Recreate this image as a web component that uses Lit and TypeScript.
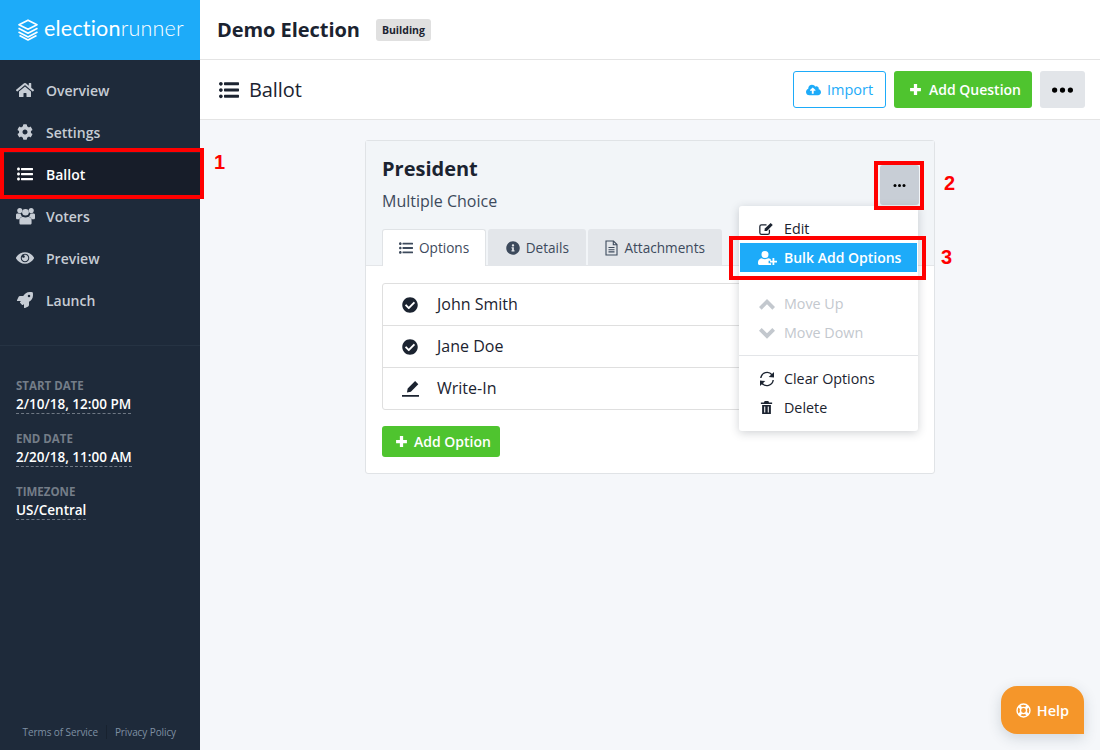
import { LitElement, html, css, svg } from "lit";
import { customElement } from "lit/decorators.js";

const P: Record<string, [number, string]> = {
  home: [576, "M280.37 148.26L96 300.11V464a16 16 0 0 0 16 16l112.06-.29a16 16 0 0 0 15.92-16V368a16 16 0 0 1 16-16h64a16 16 0 0 1 16 16v95.64a16 16 0 0 0 16 16.05L464 480a16 16 0 0 0 16-16V300L295.67 148.26a12.19 12.19 0 0 0-15.3 0zM571.6 251.47L488 182.56V44.05a12 12 0 0 0-12-12h-56a12 12 0 0 0-12 12v72.61L318.47 43a48 48 0 0 0-61 0L4.34 251.47a12 12 0 0 0-1.6 16.9l25.5 31A12 12 0 0 0 45.15 301l235.22-193.74a12.19 12.19 0 0 1 15.3 0L530.9 301a12 12 0 0 0 16.9-1.6l25.5-31a12 12 0 0 0-1.7-16.93z"],
  cog: [512, "M487.4 315.7l-42.6-24.6c4.3-23.2 4.3-47 0-70.2l42.6-24.6c4.9-2.8 7.1-8.6 5.5-14-11.1-35.6-30-67.8-54.7-94.6-3.8-4.1-10-5.1-14.8-2.3L380.8 110c-17.9-15.4-38.5-27.3-60.8-35.1V25.8c0-5.6-3.9-10.5-9.4-11.7-36.7-8.2-74.3-7.8-109.2 0-5.5 1.2-9.4 6.1-9.4 11.7V75c-22.2 7.9-42.8 19.8-60.8 35.1L88.7 85.5c-4.9-2.8-11-1.9-14.8 2.3-24.7 26.7-43.6 58.9-54.7 94.6-1.7 5.4.6 11.2 5.5 14L67.3 221c-4.3 23.2-4.3 47 0 70.2l-42.6 24.6c-4.9 2.8-7.1 8.6-5.5 14 11.1 35.6 30 67.8 54.7 94.6 3.8 4.1 10 5.1 14.8 2.3l42.6-24.6c17.9 15.4 38.5 27.3 60.8 35.1v49.2c0 5.6 3.9 10.5 9.4 11.7 36.7 8.2 74.3 7.8 109.2 0 5.5-1.2 9.4-6.1 9.4-11.7v-49.2c22.2-7.9 42.8-19.8 60.8-35.1l42.6 24.6c4.9 2.8 11 1.9 14.8-2.3 24.7-26.7 43.6-58.9 54.7-94.6 1.5-5.5-.7-11.3-5.6-14.1zM256 336c-44.1 0-80-35.9-80-80s35.9-80 80-80 80 35.9 80 80-35.9 80-80 80z"],
  list: [512, "M96 96c0 26.51-21.49 48-48 48S0 122.51 0 96s21.49-48 48-48 48 21.49 48 48zM48 208c-26.51 0-48 21.49-48 48s21.49 48 48 48 48-21.49 48-48-21.49-48-48-48zm0 160c-26.51 0-48 21.49-48 48s21.49 48 48 48 48-21.49 48-48-21.49-48-48-48zm96-236h352c8.837 0 16-7.163 16-16V76c0-8.837-7.163-16-16-16H144c-8.837 0-16 7.163-16 16v40c0 8.837 7.163 16 16 16zm0 160h352c8.837 0 16-7.163 16-16v-40c0-8.837-7.163-16-16-16H144c-8.837 0-16 7.163-16 16v40c0 8.837 7.163 16 16 16zm0 160h352c8.837 0 16-7.163 16-16v-40c0-8.837-7.163-16-16-16H144c-8.837 0-16 7.163-16 16v40c0 8.837 7.163 16 16 16z"],
  eye: [576, "M569.354 231.631C512.969 135.949 407.81 72 288 72 168.14 72 63.004 135.994 6.646 231.631a47.999 47.999 0 0 0 0 48.739C63.031 376.051 168.19 440 288 440c119.86 0 224.996-63.994 281.354-159.631a47.997 47.997 0 0 0 0-48.738zM288 392c-75.162 0-136-60.827-136-136 0-75.162 60.826-136 136-136 75.162 0 136 60.826 136 136 0 75.162-60.826 136-136 136zm104-136c0 57.438-46.562 104-104 104s-104-46.562-104-104c0-17.708 4.431-34.379 12.236-48.973l-.001.032c0 23.651 19.173 42.823 42.824 42.823s42.824-19.173 42.824-42.823c0-23.651-19.173-42.824-42.824-42.824l-.032.001C253.621 156.431 270.292 152 288 152c57.438 0 104 46.562 104 104z"],
  rocket: [512, "M505.05 19.1a15.89 15.89 0 0 0-12.2-12.2C460.65 0 435.46 0 410.36 0c-103.2 0-165.1 55.2-211.29 128H94.87A48 48 0 0 0 52 154.49l-49.42 98.8A24 24 0 0 0 24.07 288h103.77l-22.47 22.47a32 32 0 0 0 0 45.25l50.9 50.91a32 32 0 0 0 45.26 0L224 384.16V488a24 24 0 0 0 34.7 21.49l98.7-49.39a47.91 47.91 0 0 0 26.5-42.9V312.79c72.59-46.3 128-108.4 128-211.09.1-25.2.1-50.4-6.85-82.6zM384 168a40 40 0 1 1 40-40 40 40 0 0 1-40 40z"],
  check: [512, "M504 256c0 136.967-111.033 248-248 248S8 392.967 8 256 119.033 8 256 8s248 111.033 248 248zM227.314 387.314l184-184c6.248-6.248 6.248-16.379 0-22.627l-22.627-22.627c-6.248-6.249-16.379-6.249-22.628 0L216 308.118l-70.059-70.059c-6.248-6.248-16.379-6.248-22.628 0l-22.627 22.627c-6.248 6.248-6.248 16.379 0 22.627l104 104c6.249 6.249 16.379 6.249 22.628.001z"],
  info: [512, "M256 8C119.043 8 8 119.083 8 256c0 136.997 111.043 248 248 248s248-111.003 248-248C504 119.083 392.957 8 256 8zm0 110c23.196 0 42 18.804 42 42s-18.804 42-42 42-42-18.804-42-42 18.804-42 42-42zm56 254c0 6.627-5.373 12-12 12h-88c-6.627 0-12-5.373-12-12v-24c0-6.627 5.373-12 12-12h12v-64h-12c-6.627 0-12-5.373-12-12v-24c0-6.627 5.373-12 12-12h64c6.627 0 12 5.373 12 12v100h12c6.627 0 12 5.373 12 12v24z"],
  cloud: [640, "M537.6 226.6c4.1-10.7 6.4-22.4 6.4-34.6 0-53-43-96-96-96-19.7 0-38.1 6-53.3 16.2C367 64.2 315.3 32 256 32c-88.4 0-160 71.6-160 160 0 2.7.1 5.4.2 8.1C40.2 219.8 0 273.2 0 336c0 79.5 64.5 144 144 144h368c70.7 0 128-57.3 128-128 0-61.9-44-113.6-102.4-125.4zM393.4 288H328v112c0 8.8-7.2 16-16 16h-48c-8.8 0-16-7.2-16-16V288h-65.4c-14.3 0-21.4-17.2-11.3-27.3l105.4-105.4c6.2-6.2 16.4-6.2 22.6 0l105.4 105.4c10.1 10.1 2.9 27.3-11.3 27.3z"],
  plus: [24, "M9 2h6v7h7v6h-7v7H9v-7H2V9h7z"],
  trash: [24, "M9 1.500h6l1 2.500h5v2.500H3V4h5zM5 8h14v14.500H5zM8.300 10.500v9.500h1.700v-9.500zM14 10.500v9.500h1.700v-9.500z"],
  pen: [24, "M18.500 1.500l4.500 4.500-10.500 10.500-5.500 1 1-5.500zM0 21h24v2.600H0z"],
  chevup: [24, "M12 4.500l12 12-4 4-8-8-8 8-4-4z"],
  chevdown: [24, "M12 20.500L0 8.500l4-4 8 8 8-8 4 4z"],
};

const NAV: [string, string, boolean][] = [
  ["home", "Overview", false],
  ["cog", "Settings", false],
  ["list", "Ballot", true],
  ["users", "Voters", false],
  ["eye", "Preview", false],
  ["rocket", "Launch", false],
];

const icon = (name: string, cls = "") => {
  const [w, d] = P[name];
  return html`<svg class="ic ${cls}" viewBox="0 0 ${w} ${w === 24 ? 24 : 512}" fill="currentColor" aria-hidden="true">${svg`<path d=${d}></path>`}</svg>`;
};

const usersIc = html`<svg class="ic i-users" viewBox="0 0 20 18" fill="currentColor" aria-hidden="true">
  <circle cx="4" cy="3.200" r="2.700"></circle><circle cx="16" cy="3.200" r="2.700"></circle><circle cx="10" cy="5" r="3.500"></circle>
  <path d="M0 7.800C0 6.800.8 6.300 1.800 6.300h3c.2 1.300.8 2.400 1.700 3.200C4.800 10 3.800 11.200 3.500 12.500H1.500C.6 12.500 0 12 0 11zM20 7.800c0-1-.8-1.500-1.800-1.500h-3c-.2 1.300-.8 2.400-1.700 3.200 1.700.5 2.700 1.700 3 3h2c.9 0 1.500-.5 1.500-1.500zM7 9.800c1.800 1 4.200 1 6 0 2 .2 3.400 1.800 3.400 4v2.700c0 1-.7 1.500-1.600 1.500H5.200c-.9 0-1.600-.5-1.600-1.500v-2.700c0-2.200 1.400-3.800 3.400-4z"></path>
</svg>`;

const userPlusIc = html`<svg class="ic i-up" viewBox="0 0 19 14" fill="currentColor" aria-hidden="true">
  <circle cx="7" cy="3.500" r="3.500"></circle>
  <path d="M3.500 7.300c2 1.100 5 1.100 7 0 1.100.2 2 .7 2.600 1.400v1h-2.500v2.600h2.500v1.700H1.500C.6 14 0 13.400 0 12.500v-1.200C0 9.300 1.500 7.700 3.500 7.300z"></path>
  <path d="M14.500 7h1.800v2.800H19v1.800h-2.700v2.400h-1.800v-2.400H12V9.800h2.500z"></path>
</svg>`;

const dots = () => html`<svg viewBox="0 0 24 6" fill="currentColor" aria-hidden="true"><circle cx="3" cy="3" r="3"></circle><circle cx="12" cy="3" r="3"></circle><circle cx="21" cy="3" r="3"></circle></svg>`;

const logo = html`<svg class="logo-ic" viewBox="0 0 22 22" fill="none" stroke="currentColor" stroke-width="1.700" stroke-linejoin="round" aria-hidden="true">
  <path d="M11 1.200L20 5.700 11 10.200 2 5.700z"></path>
  <path d="M1.500 9.200l9.500 5 9.500-5"></path>
  <path d="M1.500 12.900l9.500 5 9.500-5"></path>
  <path d="M2.500 16.500l8.500 4.500 8.500-4.500"></path>
</svg>`;

const fileIc = html`<svg class="ic i-file" viewBox="0 0 13 16" fill="none" stroke="currentColor" stroke-width="1.100" aria-hidden="true">
  <path d="M1 1h7.500L12 4.500V15H1z"></path><path d="M8.300 1v3.700H12M3.500 7.500h6M3.500 9.700h6M3.500 11.900h6"></path>
</svg>`;

const editIc = html`<svg class="ic i-menu" viewBox="0 0 18 16" fill="none" stroke="currentColor" stroke-width="1.500" aria-hidden="true">
  <path d="M12.500 9v3.500a2 2 0 0 1-2 2H3a2 2 0 0 1-2-2V5a2 2 0 0 1 2-2h6"></path>
  <path d="M6.500 10.500l.5-3L14 .8l2.500 2.500-7 7z" fill="currentColor" stroke="none"></path>
</svg>`;

const syncIc = html`<svg class="ic i-sync" viewBox="0 0 16 16" fill="none" stroke="currentColor" stroke-width="1.400" aria-hidden="true">
  <path d="M1.800 7A6.300 6.300 0 0 1 13 3.800"></path>
  <path d="M15 1v5.500L9.700 6z" fill="currentColor" stroke="none"></path>
  <path d="M14.200 9A6.300 6.300 0 0 1 3 12.200"></path>
  <path d="M1 15V9.500L6.300 10z" fill="currentColor" stroke="none"></path>
</svg>`;

const ringIc = html`<svg class="ic i-ring" viewBox="0 0 16 16" fill="none" stroke="currentColor" aria-hidden="true">
  <circle cx="8" cy="8" r="6.900" stroke-width="1.500"></circle>
  <circle cx="8" cy="8" r="3.300" stroke-width="1.500"></circle>
  <path d="M3.100 3.100l2.500 2.500M12.900 3.100L10.400 5.600M3.100 12.900l2.500-2.500M12.900 12.900l-2.500-2.500" stroke-width="3"></path>
</svg>`;

@customElement("app-root")
export class AppRoot extends LitElement {
  static styles = css`
    :host { display: block; }
    * { box-sizing: border-box; }
    .app {
      position: relative; width: 1100px; height: 750px; overflow: hidden;
      display: grid; grid-template-columns: 200px 1fr;
      font-family: "Open Sans", "Noto Sans", sans-serif; color: #1b2330; background: #f5f7fa;
    }
    .ic { display: block; flex: none; }

    .side { background: #1e2a3a; display: flex; flex-direction: column; color: #fff; }
    .brand { height: 60px; background: #1dabf9; display: flex; align-items: center; padding-left: 17px; gap: 5px; color: #fff; }
    .logo-ic { width: 22px; height: 22px; }
    .brand-name { font-family: Lato, sans-serif; font-weight: 400; font-size: 21.500px; letter-spacing: 0.200px; line-height: 1; padding-bottom: 2px; }
    .brand-name span { font-weight: 300; }
    .nav { padding-top: 9px; border-bottom: 1px solid #263343; height: 286px; }
    .nav-item { height: 42px; display: flex; align-items: center; padding-left: 16px; font-size: 14px; font-weight: 600; color: #c6ccd4; }
    .nav-item.on { background: #171d29; color: #fff; }
    .nav-ic { width: 18px; display: flex; justify-content: center; margin-right: 12px; }
    .nav-ic .ic { width: 18px; height: 16px; }
    .nav-ic .i-users { width: 19px; height: 18px; }
    .meta { padding: 32px 16px 0; display: flex; flex-direction: column; align-items: flex-start; }
    .meta-label { font-size: 11.500px; font-weight: 700; color: #747d88; line-height: 16px; margin-top: 17px; }
    .meta-label.first { margin-top: 0; }
    .meta-value { font-size: 13.500px; font-weight: 600; color: #fff; line-height: 18px; border-bottom: 1px dashed #6f7884; margin-top: 1px; }
    .legal { margin-top: auto; display: flex; justify-content: flex-end; align-items: center; height: 36px; padding: 0 24px 1px 0; font-size: 10px; color: #7f90a3; }
    .legal a { line-height: 14px; letter-spacing: -0.100px; }
    .legal a + a { margin-left: 8px; padding-left: 8px; border-left: 1px solid #18222f; }

    .main { display: flex; flex-direction: column; min-width: 0; }
    .top { height: 60px; background: #fff; border-bottom: 1px solid #e4e4e4; display: flex; align-items: center; padding-left: 17px; }
    .title { font-size: 20px; font-weight: 700; letter-spacing: -0.050px; }
    .badge { margin-left: 16px; background: #e0e0e0; border-radius: 3px; height: 22px; width: 55px; display: flex; align-items: center; justify-content: center; font-size: 10.500px; font-weight: 700; margin-top: 1px; }
    .sub { height: 60px; background: #fff; border-bottom: 1px solid #e4e4e4; display: flex; align-items: center; padding: 0 15px 0 19px; }
    .sub .i-title { width: 20px; height: 20px; margin-right: 10px; }
    .sub-title { font-size: 20px; flex: 1; letter-spacing: -0.100px; }
    .btn { height: 37px; border-radius: 3px; display: flex; align-items: center; justify-content: center; font-size: 14px; font-weight: 600; }
    .import { width: 93px; border: 1px solid #1dabf9; color: #1dabf9; background: #fff; font-weight: 400; font-size: 14.500px; gap: 6px; margin-right: 8px; }
    .import .ic { width: 15px; height: 12px; }
    .add { background: #4fc42f; color: #fff; gap: 7px; padding-left: 4px; }
    .add .ic { width: 13px; height: 13px; }
    .add-q { width: 138px; margin-right: 8px; }
    .more { width: 45px; background: #e2e5e9; color: #000; }
    .more svg { width: 21px; height: 6px; display: block; }

    .content { flex: 1; display: flex; justify-content: center; align-items: flex-start; padding-top: 20px; }
    .card { position: relative; width: 570px; height: 334px; border: 1px solid #e0e3e6; border-radius: 3px; background: #fff; }
    .card-head { height: 125px; background: #f2f5f8; padding: 13px 16px 0; position: relative; border-bottom: 1px solid #e4e6e9; }
    .q-title { font-size: 20px; font-weight: 700; line-height: 30px; }
    .q-type { font-size: 16px; line-height: 22px; margin-top: 6px; color: #3d4a5c; }
    .q-more { position: absolute; right: 15px; top: 24px; width: 39px; height: 40px; border-radius: 3px; background: #c8ced6; color: #000; display: flex; align-items: center; justify-content: center; }
    .q-more svg { width: 13px; height: 3px; display: block; }
    .tabs { position: absolute; left: 16px; bottom: -1px; display: flex; gap: 2px; height: 37px; }
    .tab { display: flex; align-items: center; padding: 0 17px; gap: 6px; font-size: 13.600px; color: #3d4a5c; background: #e3e6ea; border-radius: 3px 3px 0 0; }
    .tab.on { background: #fff; border: 1px solid #e0e3e6; border-bottom: 0; padding: 0 16px 1px; }
    .tab.wide { padding: 0 17.500px; }
    .i-tab { width: 14px; height: 14px; }
    .i-file { width: 13px; height: 16px; }
    .body { padding: 17px 16px; }
    .opts { border: 1px solid #dfdfdf; border-radius: 3px; }
    .opt { height: 42px; display: flex; align-items: center; font-size: 16px; color: #1b2330; padding-bottom: 2px; }
    .opt:first-child { height: 41px; }
    .opt + .opt { border-top: 1px solid #dfdfdf; }
    .opt-ic { width: 54px; display: flex; justify-content: center; margin-top: 2px; }
    .opt-ic .ic { width: 16px; height: 16px; }
    .opt-ic .i-pen { width: 17px; height: 17px; margin-left: 1px; }
    .add-o { width: 118px; height: 31px; margin-top: 16px; gap: 6px; }
    .add-o .ic { width: 13px; height: 13px; }

    .menu { position: absolute; left: 373px; top: 65px; width: 179px; height: 225px; background: #fff; border-radius: 3px; padding: 8px 1px; box-shadow: 0 2px 10px rgba(40, 50, 65, 0.22); }
    .mi { height: 29px; display: flex; align-items: center; padding-left: 19px; font-size: 14.300px; color: #1b2330; }
    .mi-ic { width: 25px; display: flex; }
    .i-menu { width: 15px; height: 14px; }
    .i-up { width: 19px; height: 14px; margin-left: -1px; }
    .i-sync { width: 16px; height: 16px; }
    .mi.hot { background: #1dabf9; color: #fff; font-weight: 600; font-size: 14px; }
    .mi.off { color: #c3c8ce; }
    .mi.off .i-menu { width: 16px; height: 16px; }
    .mi .i-trash { width: 15px; height: 15px; }
    .gap { height: 17px; }
    .rule { height: 1px; background: #e3e5e8; margin: 8px -1px; }

    .help { position: absolute; left: 1001px; top: 686px; width: 83px; height: 48px; background: #f5962a; color: #fff; border-radius: 16px 16px 0 16px; display: flex; align-items: center; justify-content: center; gap: 6px; font-size: 14.500px; font-weight: 600; box-shadow: 0 4px 14px rgba(40, 60, 80, 0.18); }
    .i-ring { width: 15px; height: 15px; }

    .mark { position: absolute; border: 4px solid #f00; pointer-events: none; }
    .m1 { left: 0; top: 148px; width: 204px; height: 51px; }
    .m2 { left: 874px; top: 161px; width: 50px; height: 49px; }
    .m3 { left: 729px; top: 236px; width: 197px; height: 44px; }
    .num { position: absolute; color: #f00; font-family: "Liberation Sans", Arial, sans-serif; font-weight: 700; font-size: 20px; line-height: 24px; }
    .n1 { left: 214px; top: 150px; }
    .n2 { left: 944px; top: 171px; }
    .n3 { left: 941px; top: 245px; }
  `;

  render() {
    return html`<div class="app">
      <aside class="side">
        <div class="brand">${logo}<div class="brand-name">election<span>runner</span></div></div>
        <nav class="nav">
          ${NAV.map(([i, t, on]) => html`<div class="nav-item ${on ? "on" : ""}"><span class="nav-ic">${i === "users" ? usersIc : icon(i)}</span>${t}</div>`)}
        </nav>
        <div class="meta">
          <div class="meta-label first">START DATE</div><div class="meta-value">2/10/18, 12:00 PM</div>
          <div class="meta-label">END DATE</div><div class="meta-value">2/20/18, 11:00 AM</div>
          <div class="meta-label">TIMEZONE</div><div class="meta-value">US/Central</div>
        </div>
        <div class="legal"><a>Terms of Service</a><a>Privacy Policy</a></div>
      </aside>
      <div class="main">
        <header class="top"><div class="title">Demo Election</div><div class="badge">Building</div></header>
        <div class="sub">
          ${icon("list", "i-title")}
          <div class="sub-title">Ballot</div>
          <div class="btn import">${icon("cloud")}Import</div>
          <div class="btn add add-q">${icon("plus")}Add Question</div>
          <div class="btn more">${dots()}</div>
        </div>
        <div class="content">
          <section class="card">
            <div class="card-head">
              <div class="q-title">President</div>
              <div class="q-type">Multiple Choice</div>
              <div class="q-more">${dots()}</div>
              <div class="tabs">
                <div class="tab on">${icon("list", "i-tab")}Options</div>
                <div class="tab wide">${icon("info", "i-tab")}Details</div>
                <div class="tab">${fileIc}Attachments</div>
              </div>
            </div>
            <div class="body">
              <div class="opts">
                <div class="opt"><span class="opt-ic">${icon("check")}</span>John Smith</div>
                <div class="opt"><span class="opt-ic">${icon("check")}</span>Jane Doe</div>
                <div class="opt"><span class="opt-ic">${icon("pen", "i-pen")}</span>Write-In</div>
              </div>
              <div class="btn add add-o">${icon("plus")}Add Option</div>
            </div>
            <div class="menu">
              <div class="mi"><span class="mi-ic">${editIc}</span>Edit</div>
              <div class="mi hot"><span class="mi-ic">${userPlusIc}</span>Bulk Add Options</div>
              <div class="gap"></div>
              <div class="mi off"><span class="mi-ic">${icon("chevup", "i-menu")}</span>Move Up</div>
              <div class="mi off"><span class="mi-ic">${icon("chevdown", "i-menu")}</span>Move Down</div>
              <div class="rule"></div>
              <div class="mi"><span class="mi-ic">${syncIc}</span>Clear Options</div>
              <div class="mi"><span class="mi-ic">${icon("trash", "i-trash")}</span>Delete</div>
            </div>
          </section>
        </div>
      </div>
      <div class="help">${ringIc}Help</div>
      <div class="mark m1"></div>
      <div class="mark m2"></div>
      <div class="mark m3"></div>
      <div class="num n1">1</div>
      <div class="num n2">2</div>
      <div class="num n3">3</div>
    </div>`;
  }
}
